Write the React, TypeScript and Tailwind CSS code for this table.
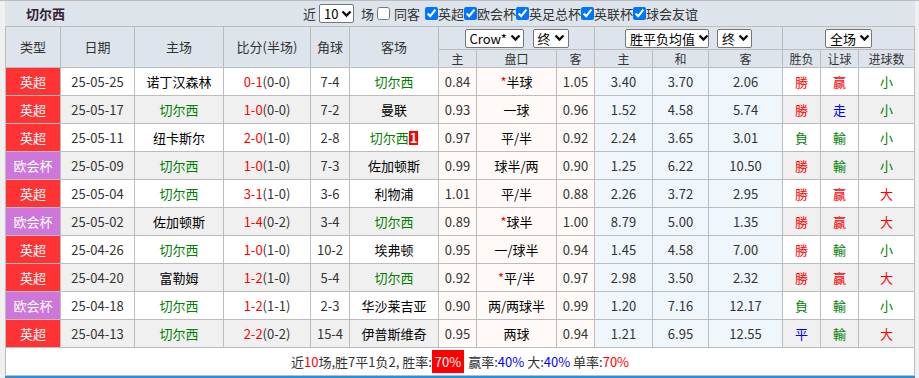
import React from 'react';

type Match = {
  type: '英超' | '欧会杯';
  date: string;
  home: string;
  score: string;
  half: string;
  corner: string;
  away: string;
  red?: number;
  o1: string;
  pan: string;
  star?: boolean;
  o2: string;
  w: string;
  d: string;
  l: string;
  res: string;
  rq: string;
  dx: string;
};

const matches: Match[] = [
  { type: '英超', date: '25-05-25', home: '诺丁汉森林', score: '0-1', half: '(0-0)', corner: '7-4', away: '切尔西', o1: '0.84', pan: '半球', star: true, o2: '1.05', w: '3.40', d: '3.70', l: '2.06', res: '勝', rq: '赢', dx: '小' },
  { type: '英超', date: '25-05-17', home: '切尔西', score: '1-0', half: '(0-0)', corner: '7-2', away: '曼联', o1: '0.93', pan: '一球', o2: '0.96', w: '1.52', d: '4.58', l: '5.74', res: '勝', rq: '走', dx: '小' },
  { type: '英超', date: '25-05-11', home: '纽卡斯尔', score: '2-0', half: '(1-0)', corner: '2-8', away: '切尔西', red: 1, o1: '0.97', pan: '平/半', o2: '0.92', w: '2.24', d: '3.65', l: '3.01', res: '負', rq: '輸', dx: '小' },
  { type: '欧会杯', date: '25-05-09', home: '切尔西', score: '1-0', half: '(1-0)', corner: '7-3', away: '佐加顿斯', o1: '0.99', pan: '球半/两', o2: '0.90', w: '1.25', d: '6.22', l: '10.50', res: '勝', rq: '輸', dx: '小' },
  { type: '英超', date: '25-05-04', home: '切尔西', score: '3-1', half: '(1-0)', corner: '3-6', away: '利物浦', o1: '1.01', pan: '平/半', o2: '0.88', w: '2.26', d: '3.72', l: '2.95', res: '勝', rq: '赢', dx: '大' },
  { type: '欧会杯', date: '25-05-02', home: '佐加顿斯', score: '1-4', half: '(0-2)', corner: '3-4', away: '切尔西', o1: '0.89', pan: '球半', star: true, o2: '1.00', w: '8.79', d: '5.00', l: '1.35', res: '勝', rq: '赢', dx: '大' },
  { type: '英超', date: '25-04-26', home: '切尔西', score: '1-0', half: '(1-0)', corner: '10-2', away: '埃弗顿', o1: '0.95', pan: '一/球半', o2: '0.94', w: '1.45', d: '4.58', l: '7.00', res: '勝', rq: '輸', dx: '小' },
  { type: '英超', date: '25-04-20', home: '富勒姆', score: '1-2', half: '(1-0)', corner: '5-4', away: '切尔西', o1: '0.92', pan: '平/半', star: true, o2: '0.97', w: '2.98', d: '3.50', l: '2.32', res: '勝', rq: '赢', dx: '大' },
  { type: '欧会杯', date: '25-04-18', home: '切尔西', score: '1-2', half: '(1-1)', corner: '2-3', away: '华沙莱吉亚', o1: '0.90', pan: '两/两球半', o2: '0.99', w: '1.20', d: '7.16', l: '12.17', res: '負', rq: '輸', dx: '小' },
  { type: '英超', date: '25-04-13', home: '切尔西', score: '2-2', half: '(0-2)', corner: '15-4', away: '伊普斯维奇', o1: '0.95', pan: '两球', o2: '0.94', w: '1.21', d: '6.95', l: '12.55', res: '平', rq: '輸', dx: '大' },
];

const resColor: Record<string, string> = {
  '勝': 'text-[#ff0000]',
  '赢': 'text-[#ff0000]',
  '大': 'text-[#ff0000]',
  '負': 'text-[#008000]',
  '輸': 'text-[#008000]',
  '小': 'text-[#008000]',
  '平': 'text-[#0000ff]',
  '走': 'text-[#0000ff]',
};

const Chevron = () => (
  <svg width="11" height="8" viewBox="0 0 11 8" className="ml-[3px] shrink-0">
    <polyline points="1.5,1.5 5.5,5.5 9.5,1.5" fill="none" stroke="#111" strokeWidth="2.4" />
  </svg>
);

const Select = ({ label, w }: { label: string; w: string }) => (
  <span
    className={`inline-flex shrink-0 items-center justify-between whitespace-nowrap h-[19px] bg-white border border-[#767676] rounded-[2px] px-[4px] text-[13px] leading-[17px] text-black ${w}`}
  >
    <span className="whitespace-nowrap">{label}</span>
    <Chevron />
  </span>
);

const Check = ({ checked }: { checked?: boolean }) => (
  <input
    type="checkbox"
    defaultChecked={checked}
    className="w-[13px] h-[13px] m-0 shrink-0 accent-[#0075ff]"
  />
);

const Team = ({ name, red }: { name: string; red?: number }) => (
  <span className={name === '切尔西' ? 'text-[#008000]' : 'text-black'}>
    {name}
    {red ? (
      <span className="inline-block bg-[#ff0000] text-white font-bold px-[1px] leading-[14px]">{red}</span>
    ) : null}
  </span>
);

const App: React.FC = () => {
  const th = 'border border-[#bcbcbc] font-normal text-[#333] text-center p-0 whitespace-nowrap';
  const td = 'border border-[#bcbcbc] text-center p-0 h-[28px] whitespace-nowrap';

  return (
    <div
      className="min-h-[378px] w-[919px] bg-[#f0f0f0] border-t border-[#bcbcbc] text-[12px] text-[#333]"
      style={{ fontFamily: '"Noto Sans CJK SC", "Noto Sans", sans-serif' }}
    >
      <div className="ml-[5px] w-[910px] bg-[#dde4ec]">
        {/* Title bar */}
        <div className="flex items-center h-[25px] whitespace-nowrap">
          <div className="w-[298px] shrink-0 pl-[21px] font-bold text-[13px] text-[#332233]">切尔西</div>
          <div className="flex items-center text-[13px] text-[#333] whitespace-nowrap">
            <span>近</span>
            <span className="ml-[3px] flex">
              <Select label="10" w="w-[35px]" />
            </span>
            <span className="ml-[7px]">场</span>
            <span className="ml-[3px] flex"><Check /></span>
            <span className="ml-[4px]">同客</span>
            <span className="ml-[5px] flex"><Check checked /></span>
            <span>英超</span>
            <Check checked />
            <span>欧会杯</span>
            <Check checked />
            <span>英足总杯</span>
            <Check checked />
            <span>英联杯</span>
            <Check checked />
            <span>球会友谊</span>
          </div>
        </div>

        {/* Table */}
        <table className="w-[910px] border-collapse table-fixed">
          <colgroup>
            <col className="w-[55px]" />
            <col className="w-[74px]" />
            <col className="w-[89px]" />
            <col className="w-[87px]" />
            <col className="w-[39px]" />
            <col className="w-[89px]" />
            <col className="w-[38px]" />
            <col className="w-[80px]" />
            <col className="w-[38px]" />
            <col className="w-[58px]" />
            <col className="w-[56px]" />
            <col className="w-[74px]" />
            <col className="w-[38px]" />
            <col className="w-[38px]" />
            <col className="w-[56px]" />
          </colgroup>
          <thead className="bg-[#dde4ec] text-[13px]">
            <tr className="h-[23px]">
              <th rowSpan={2} className={th}>类型</th>
              <th rowSpan={2} className={th}>日期</th>
              <th rowSpan={2} className={th}>主场</th>
              <th rowSpan={2} className={th}>比分(半场)</th>
              <th rowSpan={2} className={th}>角球</th>
              <th rowSpan={2} className={th}>客场</th>
              <th colSpan={3} className={th}>
                <div className="flex items-center justify-center gap-[9px]">
                  <Select label="Crow*" w="w-[59px]" />
                  <Select label="终" w="w-[36px]" />
                </div>
              </th>
              <th colSpan={3} className={th}>
                <div className="flex items-center justify-center gap-[8px]">
                  <Select label="胜平负均值" w="w-[84px]" />
                  <Select label="终" w="w-[35px]" />
                </div>
              </th>
              <th colSpan={3} className={th}>
                <div className="flex items-center justify-center">
                  <Select label="全场" w="w-[47px]" />
                </div>
              </th>
            </tr>
            <tr className="h-[18px] text-[12px] leading-[17px]">
              <th className={th}>主</th>
              <th className={th}>盘口</th>
              <th className={th}>客</th>
              <th className={th}>主</th>
              <th className={th}>和</th>
              <th className={th}>客</th>
              <th className={th}>胜负</th>
              <th className={th}>让球</th>
              <th className={th}>进球数</th>
            </tr>
          </thead>
          <tbody className="text-[13px]">
            {matches.map((m, i) => {
              const rowBg = i % 2 === 0 ? 'bg-white' : 'bg-[#f0f0f0]';
              return (
                <tr key={m.date} className={rowBg}>
                  <td
                    className={`${td} text-white ${m.type === '英超' ? 'bg-[#ff3333]' : 'bg-[#cc77d9]'}`}
                  >
                    {m.type}
                  </td>
                  <td className={td}>{m.date}</td>
                  <td className={td}><Team name={m.home} /></td>
                  <td className={td}>
                    <span className="text-[#ff0000]">{m.score}</span>
                    <span>{m.half}</span>
                  </td>
                  <td className={td}>{m.corner}</td>
                  <td className={td}><Team name={m.away} red={m.red} /></td>
                  <td className={`${td} bg-[#fffaf7]`}>{m.o1}</td>
                  <td className={`${td} bg-[#fffaf7] text-black`}>
                    {m.star && <span className="text-[#ff0000]">*</span>}
                    {m.pan}
                  </td>
                  <td className={`${td} bg-[#fffaf7]`}>{m.o2}</td>
                  <td className={`${td} bg-[#eff7fc]`}>{m.w}</td>
                  <td className={`${td} bg-[#eff7fc]`}>{m.d}</td>
                  <td className={`${td} bg-[#eff7fc]`}>{m.l}</td>
                  <td className={`${td} ${resColor[m.res]}`}>{m.res}</td>
                  <td className={`${td} ${resColor[m.rq]}`}>{m.rq}</td>
                  <td className={`${td} ${resColor[m.dx]}`}>{m.dx}</td>
                </tr>
              );
            })}
            <tr className="bg-white">
              <td colSpan={15} className={`${td} text-[#333]`}>
                近<span className="text-[#ff0000]">10</span>场,胜7平1负2, 胜率:
                <span className="bg-[#ff0000] text-white px-[3px] py-[2px]">70%</span>
                <span className="ml-[4px]">赢率:</span>
                <span className="text-[#0000ff]">40%</span> 大:
                <span className="text-[#0000ff]">40%</span> 单率:
                <span className="text-[#ff0000]">70%</span>
              </td>
            </tr>
          </tbody>
        </table>
        <div className="h-[3px] bg-[#2a8fd6]" />
      </div>
    </div>
  );
};

export default App;
